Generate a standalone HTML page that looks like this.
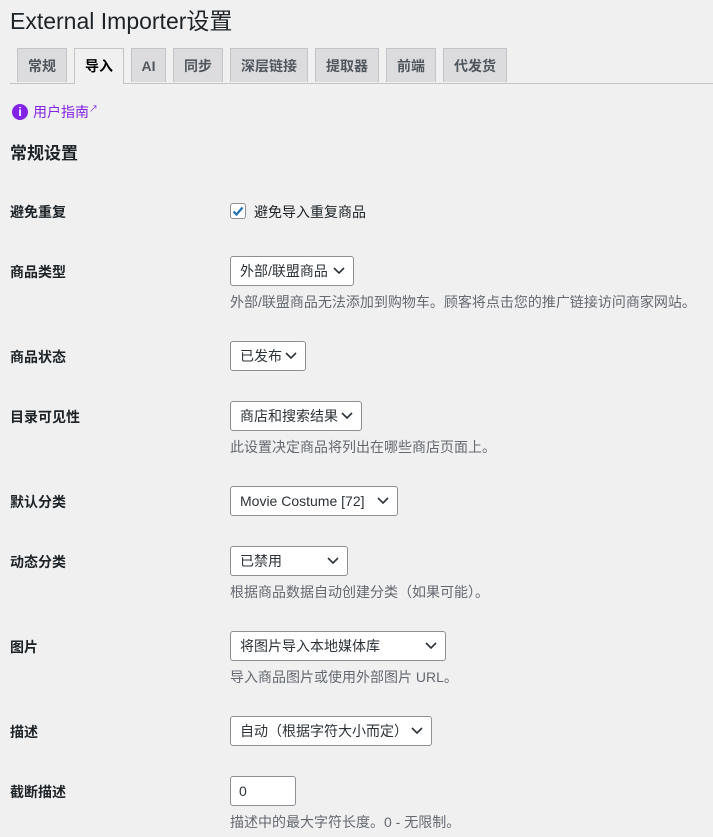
<!DOCTYPE html>
<html><head><meta charset="utf-8"><style>
body{margin:0;background:#f0f0f1;font-family:"Liberation Sans","Noto Sans CJK SC",sans-serif;color:#1d2327;font-size:14px;width:713px;height:837px;overflow:hidden;position:relative}
.a{position:absolute;white-space:nowrap}
h1{position:absolute;left:10px;top:4px;margin:0;font-size:23px;font-weight:400;line-height:34px}
.tabs{position:absolute;left:10px;right:0;top:83px;border-top:1px solid #c3c4c7}
.tab{position:absolute;top:48px;height:34px;background:#dcdcde;border:1px solid #c3c4c7;border-bottom:none;box-sizing:border-box;font-weight:600;font-size:14px;color:#50575e;text-align:center;line-height:35px}
.tab.on{background:#f0f0f1;color:#000;height:36px}
.lbl{font-weight:600;font-size:14px}
.sel{position:absolute;left:230px;height:30px;border:1px solid #8c8f94;border-radius:3px;background:#fff;box-sizing:border-box;padding-left:9px;line-height:28px;font-size:14px;color:#2c3338}
.sel svg{position:absolute;right:8px;top:10px}
.desc{color:#646970;font-size:14px}
</style></head><body>
<h1>External Importer设置</h1>
<div class="tabs"></div>
<div class="tab" style="left:17px;width:50px">常规</div>
<div class="tab on" style="left:74px;width:50px">导入</div>
<div class="tab" style="left:131px;width:35px">AI</div>
<div class="tab" style="left:173px;width:50px">同步</div>
<div class="tab" style="left:230px;width:78px">深层链接</div>
<div class="tab" style="left:315px;width:64px">提取器</div>
<div class="tab" style="left:386px;width:50px">前端</div>
<div class="tab" style="left:443px;width:64px">代发货</div>

<div class="a" style="left:12px;top:104px;width:16px;height:16px;border-radius:50%;background:#8224e3;color:#fff;font-size:12px;font-weight:700;text-align:center;line-height:16px">i</div>
<div class="a" style="left:33px;top:102px;color:#8224e3;font-size:14px">用户指南<span style="font-size:9px;vertical-align:top">↗</span></div>
<div class="a" style="left:10px;top:139px;font-size:17px;font-weight:600">常规设置</div>

<div class="a lbl" style="left:10px;top:202px">避免重复</div>
<div class="a" style="left:230px;top:203px;width:16px;height:16px;border:1px solid #8c8f94;border-radius:3px;background:#fff;box-sizing:border-box"><svg width="14" height="14" viewBox="0 0 14 14" style="position:absolute;left:0;top:0"><path d="M2.5 7.5l3 3 6-7" stroke="#2271b1" stroke-width="2.2" fill="none"/></svg></div>
<div class="a" style="left:254px;top:202px;font-size:14px">避免导入重复商品</div>

<div class="a lbl" style="left:10px;top:262px">商品类型</div>
<div class="sel" style="top:256px;width:124px">外部/联盟商品<svg width="12" height="8"><path d="M1 1l5 5 5-5" stroke="#2c3338" stroke-width="1.6" fill="none"/></svg></div>
<div class="a desc" style="left:230px;top:292px">外部/联盟商品无法添加到购物车。顾客将点击您的推广链接访问商家网站。</div>

<div class="a lbl" style="left:10px;top:347px">商品状态</div>
<div class="sel" style="top:341px;width:76px">已发布<svg width="12" height="8"><path d="M1 1l5 5 5-5" stroke="#2c3338" stroke-width="1.6" fill="none"/></svg></div>

<div class="a lbl" style="left:10px;top:407px">目录可见性</div>
<div class="sel" style="top:401px;width:132px">商店和搜索结果<svg width="12" height="8"><path d="M1 1l5 5 5-5" stroke="#2c3338" stroke-width="1.6" fill="none"/></svg></div>
<div class="a desc" style="left:230px;top:437px">此设置决定商品将列出在哪些商店页面上。</div>

<div class="a lbl" style="left:10px;top:492px">默认分类</div>
<div class="sel" style="top:486px;width:168px">Movie Costume [72]<svg width="12" height="8"><path d="M1 1l5 5 5-5" stroke="#2c3338" stroke-width="1.6" fill="none"/></svg></div>

<div class="a lbl" style="left:10px;top:552px">动态分类</div>
<div class="sel" style="top:546px;width:118px">已禁用<svg width="12" height="8"><path d="M1 1l5 5 5-5" stroke="#2c3338" stroke-width="1.6" fill="none"/></svg></div>
<div class="a desc" style="left:230px;top:582px">根据商品数据自动创建分类（如果可能）。</div>

<div class="a lbl" style="left:10px;top:637px">图片</div>
<div class="sel" style="top:631px;width:216px">将图片导入本地媒体库<svg width="12" height="8"><path d="M1 1l5 5 5-5" stroke="#2c3338" stroke-width="1.6" fill="none"/></svg></div>
<div class="a desc" style="left:230px;top:667px">导入商品图片或使用外部图片 URL。</div>

<div class="a lbl" style="left:10px;top:722px">描述</div>
<div class="sel" style="top:716px;width:202px">自动（根据字符大小而定）<svg width="12" height="8"><path d="M1 1l5 5 5-5" stroke="#2c3338" stroke-width="1.6" fill="none"/></svg></div>

<div class="a lbl" style="left:10px;top:782px">截断描述</div>
<div class="sel" style="top:776px;width:66px;padding-left:8px">0</div>
<div class="a desc" style="left:230px;top:812px">描述中的最大字符长度。0 - 无限制。</div>
</body></html>
